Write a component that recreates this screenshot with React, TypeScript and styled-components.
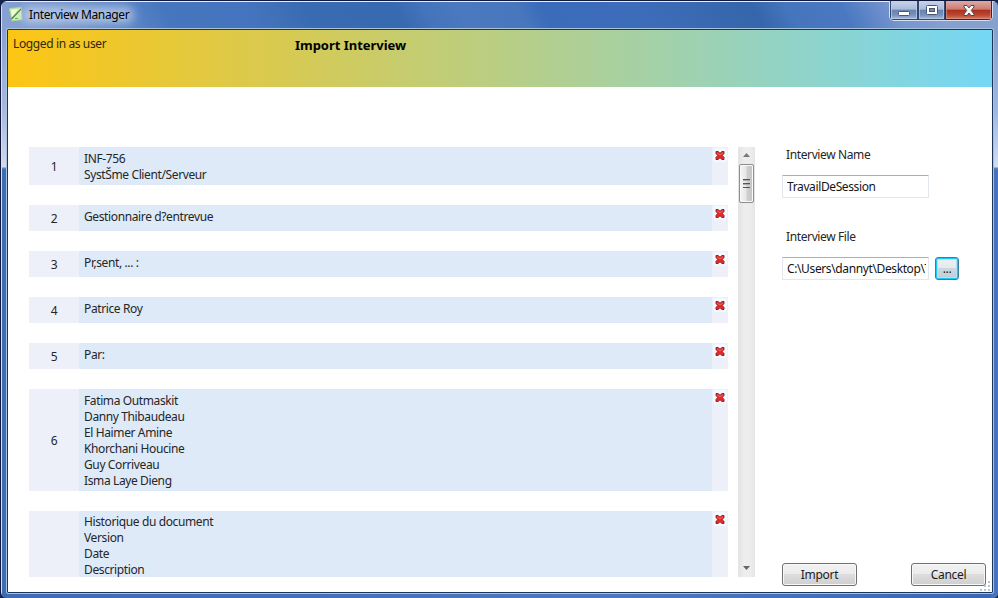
import React from 'react';
import styled, { createGlobalStyle } from 'styled-components';

const GlobalStyle = createGlobalStyle`
  *, *::before, *::after { box-sizing: border-box; }
  html, body, #root { margin: 0; width: 998px; height: 598px; overflow: hidden; }
  body { background: #16264a; font: 12px/16px "Noto Sans", "Open Sans", sans-serif; letter-spacing: -0.38px; color: #262626; }
`;

const Window = styled.div`
  width: 998px;
  height: 598px;
  display: flex;
  flex-direction: column;
  border: 1px solid #10183c;
  border-right: 0;
  border-bottom: 0;
  border-radius: 7px 6px 5px 6px;
  padding: 1px 4px 4px 1px;
  overflow: hidden;
  background:
    linear-gradient(#e9effa, #e9effa) 0 0 / 100% 1px no-repeat,
    linear-gradient(#d4e0f4, #d4e0f4) 0 0 / 1px 100% no-repeat,
    linear-gradient(#809ccf00 28px, #a9b9df 110px, #d5daec 166px, #6b8cbc 167px, #3d6bb5 169px) 0 0 / 7px 100% no-repeat,
    linear-gradient(#809ccf00 28px, #9fb8e0 110px, #d3ddf1 166px, #6586b5 167px, #4573bd 169px) 100% 0 / 7px 100% no-repeat,
    linear-gradient(62deg, #8fa8d6 0, #86a0d2 75px, #7d9acf 100px, #5b85c6 180px, #4676be 215px, #4474bd 290px, #396bb2 340px, #386ab2 421px, #4474bb 445px, #4a79bf 475px, #4877be 527px, #3b6cb9 549px, #3d6db9 633px, #3566ab 735px, #4575bd 766px, #4b79c1 815px, #7896cf 860px, #86a0cf 900px) 0 0 / 100% 160px no-repeat,
    linear-gradient(90deg, #3d6bb5, #416fba 30%, #4b79c1 60%, #3867b3);
`;

const TitleBar = styled.header`
  height: 26px;
  flex: none;
  display: flex;
  align-items: flex-start;
  padding-left: 8px;
`;

const AppIcon = styled.svg`
  width: 14px;
  height: 15px;
  margin-top: 5px;
  margin-left: -1px;
  flex: none;
`;

const WindowTitle = styled.span`
  margin-left: 6px;
  padding-top: 5px;
  color: #000;
  white-space: nowrap;
  position: relative;
  z-index: 0;
  &::before {
    content: '';
    position: absolute;
    z-index: -1;
    inset: 5px -5px 0 -7px;
    border-radius: 8px;
    background: rgba(218, 227, 243, 0.62);
    filter: blur(5px);
  }
`;

const Controls = styled.div`
  display: flex;
  margin-left: auto;
  margin-right: 1px;
  margin-top: -1px;
  height: 20px;
  width: 104px;
  border: 1px solid #d3deef;
  border-top: 0;
  border-radius: 0 0 5px 5px;
  overflow: hidden;
`;

const Control = styled.div<{ $w: number; $close?: boolean; $low?: boolean }>`
  width: ${p => p.$w}px;
  flex: none;
  height: 19px;
  display: flex;
  align-items: ${p => (p.$low ? 'flex-end' : 'center')};
  padding-bottom: ${p => (p.$low ? 3 : 0)}px;
  justify-content: center;
  border: 1px solid ${p => (p.$close ? '#531b25' : '#34466b')};
  border-top: 0;
  box-shadow: inset 0 0 0 1px ${p => (p.$close ? '#e0a19c88' : '#c2d0e7aa')};
  background: ${p => p.$close
    ? 'linear-gradient(#e0aaa3 0, #cb7c72 46%, #ad2f1d 50%, #bb4830 78%, #d77c64)'
    : 'linear-gradient(#c7d4e9 0, #a9bbd9 46%, #6682b1 50%, #7691be 78%, #a4bbdf)'};
`;

const Client = styled.main`
  width: 986px;
  height: 564px;
  margin-left: 5px;
  flex: none;
  display: flex;
  flex-direction: column;
  border: 1px solid #1c355b;
  outline: 1px solid #a8c2de;
  border-radius: 1px;
  margin-top: 1px;
  background: #fff;
`;

const Banner = styled.section`
  height: 57px;
  flex: none;
  display: flex;
  padding: 6px 5px;
  background: linear-gradient(90deg, #fdc513, #75d7f5);
`;

const User = styled.span`
  width: 282px;
  color: #30290f;
`;

const Heading = styled.h1`
  margin: 1px 0 0;
  color: #000;
  font-size: 13px;
  line-height: 16px;
  font-weight: 700;
  letter-spacing: -0.03px;
`;

const Content = styled.section`
  display: flex;
  flex: 1;
  padding: 60px 6px 5px 21px;
`;

const List = styled.div`
  width: 699px;
  height: 430px;
  flex: none;
  display: flex;
  flex-direction: column;
  gap: 20px;
  overflow: hidden;
`;

const Row = styled.article<{ $h: number }>`
  display: grid;
  flex: none;
  grid-template-columns: 50px 633px 16px;
  height: ${p => p.$h}px;
  background: #edf0f9;
`;

const RowNumber = styled.div`
  display: flex;
  align-items: center;
  justify-content: center;
  padding-top: 2px;
`;

const RowText = styled.div<{ $top: number }>`
  background: #deeaf8;
  padding: ${p => p.$top}px 5px 0;
  white-space: pre;
`;

const RemoveButton = styled.button`
  border: 0;
  margin: 1px;
  padding: 2px 2px 0;
  width: 14px;
  height: 14px;
  border-radius: 3px;
  background: #f5f9ff;
  svg { display: block; }
`;

const Scrollbar = styled.div`
  width: 17px;
  height: 430px;
  margin-left: 10px;
  flex: none;
  display: flex;
  flex-direction: column;
  align-items: center;
  background: linear-gradient(90deg, #e3e3e3, #ededed 35%, #ededed 70%, #e6e6e6);
`;

const ArrowBox = styled.div<{ $up?: boolean }>`
  height: 17px;
  display: flex;
  align-items: center;
  padding-bottom: ${p => (p.$up ? 2 : 1)}px;
  svg { display: block; }
`;

const Thumb = styled.div`
  width: 15px;
  height: 39px;
  display: flex;
  align-items: center;
  justify-content: center;
  border: 1px solid #8d8d8d;
  border-radius: 2px;
  box-shadow: inset 0 0 0 1px #fafafa;
  background: linear-gradient(90deg, #f5f5f5, #e7e7e7 45%, #cfcfcf 55%, #c4c4c4);
`;

const Track = styled.div`
  flex: 1;
`;

const Form = styled.form`
  width: 204px;
  margin-left: 27px;
  display: flex;
  flex-direction: column;
`;

const Label = styled.label`
  height: 28px;
  padding-left: 4px;
`;

const FieldRow = styled.div<{ $gap?: number }>`
  display: flex;
  align-items: center;
  gap: 6px;
  height: 23px;
  margin-bottom: ${p => p.$gap ?? 0}px;
`;

const Input = styled.input`
  width: 147px;
  height: 23px;
  padding: 0 2px 0 4px;
  border: 1px solid #e2e6ee;
  border-top-color: #abadb3;
  border-radius: 1px;
  background: #fff;
  color: #151515;
  font: inherit;
  letter-spacing: inherit;
  outline: 0;
`;

const Button = styled.button<{ $w: number }>`
  width: ${p => p.$w}px;
  height: 23px;
  padding: 0;
  border: 1px solid #707070;
  border-radius: 3px;
  box-shadow: inset 0 0 0 1px #f8f8f8;
  background: linear-gradient(#f2f2f2, #ebebeb 49%, #dddddd 50%, #cfcfcf);
  color: #1c1c1c;
  font: inherit;
  letter-spacing: -0.3px;
`;

const BrowseButton = styled(Button)`
  border-color: #3c7f9e;
  padding: 0;
  box-shadow: inset 0 0 0 1px #19c9f7, inset 0 0 0 2px #a9e4f5;
  background: linear-gradient(#eef1f3, #e3e9ed 49%, #cbd8df 50%, #bfced6);
`;

const Actions = styled.div`
  display: flex;
  justify-content: space-between;
  margin-top: auto;
  height: 24px;
  position: relative;
`;

const Grip = styled.svg`
  position: absolute;
  right: -4px;
  bottom: -4px;
`;

const rows = [
  { number: '1', h: 38, top: 4, lines: ['INF-756', 'SystŠme Client/Serveur'] },
  { number: '2', h: 26, top: 4, lines: ['Gestionnaire d?entrevue'] },
  { number: '3', h: 26, top: 4, lines: ['Pr‚sent, ... :'] },
  { number: '4', h: 26, top: 4, lines: ['Patrice Roy'] },
  { number: '5', h: 26, top: 4, lines: ['Par:'] },
  { number: '6', h: 102, top: 4, lines: ['Fatima Outmaskit', 'Danny Thibaudeau', 'El Haimer Amine', 'Khorchani Houcine', 'Guy Corriveau', 'Isma Laye Dieng'] },
  { number: '', h: 66, top: 3, lines: ['Historique du document', 'Version', 'Date', 'Description'] },
];

const gripDots = [[8, 0], [4, 4], [8, 4], [0, 8], [4, 8], [8, 8]];

function RemoveIcon() {
  return (
    <svg width="10" height="10" viewBox="0 0 10 10">
      <path d="M1 .5h2l2 1.7L7 .5h2v2L7.3 4.5 9 6.5v2H7L5 6.8 3 8.5H1v-2l1.7-2L1 2.5Z" fill="#f02424" stroke="#7c2224" strokeWidth=".9" />
      <path d="M2 1.7l2 1.7h2l2-1.7" fill="none" stroke="#fa6560" />
    </svg>
  );
}

export default function App() {
  return (
    <>
      <GlobalStyle />
      <Window>
        <TitleBar>
          <AppIcon viewBox="0 0 14 15">
            <path d="M.5 1.5 12 .5l1 12-10 1.5Z" fill="#c9efb0" stroke="#a5d893" />
            <path d="M2 3l7-1-6 8Z" fill="#eefbdc" />
            <path d="M2.5 12 12 2" stroke="#4d7349" strokeWidth="1.1" />
            <path d="M6 11.5h3" stroke="#6caa59" />
          </AppIcon>
          <WindowTitle>Interview Manager</WindowTitle>
          <Controls>
            <Control $w={28} $low>
              <svg width="12" height="5"><rect x=".5" y=".5" width="11" height="4" rx="1" fill="#fff" stroke="#4c5572" /></svg>
            </Control>
            <Control $w={27}>
              <svg width="12" height="10"><rect x=".5" y=".5" width="11" height="9" rx="1" fill="#fff" stroke="#4c5572" /><rect x="3.5" y="3.5" width="5" height="3" fill="#6e8cb8" stroke="#4c5572" /></svg>
            </Control>
            <Control $w={47} $close>
              <svg width="12" height="11" viewBox="0 0 12 11"><path d="M1 .5h3l2 2.4L8 .5h3v1.4L8.3 5.5 11 9v1.5H8L6 8l-2 2.5H1V9l2.7-3.5L1 1.9Z" fill="#f7f7f7" stroke="#514553" /></svg>
            </Control>
          </Controls>
        </TitleBar>
        <Client>
          <Banner>
            <User>Logged in as user</User>
            <Heading>Import Interview</Heading>
          </Banner>
          <Content>
            <List>
              {rows.map((row, i) => (
                <Row key={i} $h={row.h}>
                  <RowNumber>{row.number}</RowNumber>
                  <RowText $top={row.top}>{row.lines.join('\n')}</RowText>
                  <RemoveButton type="button" aria-label="Remove"><RemoveIcon /></RemoveButton>
                </Row>
              ))}
            </List>
            <Scrollbar>
              <ArrowBox $up><svg width="7" height="4"><path d="M0 4 3.5 0 7 4Z" fill="#777" /></svg></ArrowBox>
              <Thumb>
                <svg width="8" height="9"><path d="M0 .5h7M0 4.5h7M0 8.5h7" stroke="#555" /><path d="M0 1.5h7M0 5.5h7" stroke="#aaa" /></svg>
              </Thumb>
              <Track />
              <ArrowBox><svg width="7" height="4"><path d="M0 0h7L3.5 4Z" fill="#666" /></svg></ArrowBox>
            </Scrollbar>
            <Form>
              <Label>Interview Name</Label>
              <FieldRow $gap={31}><Input readOnly value="TravailDeSession" /></FieldRow>
              <Label>Interview File</Label>
              <FieldRow><Input readOnly value="C:\Users\dannyt\Desktop\T" /><BrowseButton type="button" $w={24}>...</BrowseButton></FieldRow>
              <Actions>
                <Button type="button" $w={75}>Import</Button>
                <Button type="button" $w={75}>Cancel</Button>
                <Grip width="10" height="10">
                  {gripDots.map(([x, y]) => <rect key={`${x}-${y}`} x={x} y={y} width="2" height="2" fill="#b8c1d0" />)}
                </Grip>
              </Actions>
            </Form>
          </Content>
        </Client>
      </Window>
    </>
  );
}
